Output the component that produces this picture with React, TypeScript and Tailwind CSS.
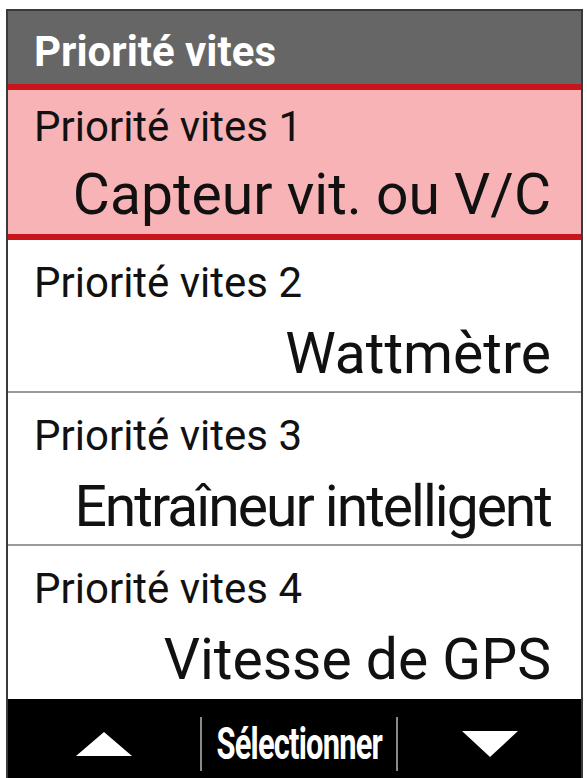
const rows = [
  { label: "Priorité vites 1", value: "Capteur vit. ou V/C", active: true, track: "" },
  { label: "Priorité vites 2", value: "Wattmètre", track: "" },
  { label: "Priorité vites 3", value: "Entraîneur intelligent", track: "tracking-[-2px]" },
  { label: "Priorité vites 4", value: "Vitesse de GPS", track: "" },
];

export default function App() {
  return (
    <div className="w-[587px] h-[778px] bg-white overflow-hidden font-['Roboto',sans-serif]">
      <div className="ml-[6px] mt-[9px] w-[577px] h-[780px] border-2 border-[#3a3a3a] flex flex-col">
        <div className="h-[73px] shrink-0 bg-[#666666] text-white font-bold text-[42px] leading-none pl-[26px] pt-[20px]">
          Priorité vites
        </div>
        {rows.map((r, i) => (
          <div
            key={r.label}
            className={
              r.active
                ? "h-[156px] shrink-0 bg-[#f8b3b6] border-y-[6px] border-[#c8141a] pt-[16px]"
                : i === rows.length - 1
                  ? "h-[153px] shrink-0 bg-white pt-[22px]"
                  : "h-[153px] shrink-0 bg-white border-b-2 border-[#9a9a9a] pt-[22px]"
            }
          >
            <div className="pl-[26px] text-[42px] leading-none text-[#111]">{r.label}</div>
            <div
              className={`pr-[30px] text-right text-[57px] leading-none text-[#111] ${
                r.active ? "mt-[18px]" : "mt-[21px]"
              } ${r.track}`}
            >
              {r.value}
            </div>
          </div>
        ))}
        <div className="flex-1 bg-black flex items-center pt-[2px]">
          <div className="w-[192px] flex justify-center">
            <svg width="56" height="24" viewBox="0 0 56 24">
              <polygon points="28,0 56,24 0,24" fill="white" />
            </svg>
          </div>
          <div className="w-[2px] h-[54px] bg-[#8a8a8a]" />
          <div className="w-[194px] flex justify-center">
            <span className="text-white font-bold text-[44px] leading-none inline-block scale-x-[0.7] tracking-tight">
              Sélectionner
            </span>
          </div>
          <div className="w-[2px] h-[54px] bg-[#8a8a8a]" />
          <div className="flex-1 flex justify-center">
            <svg width="56" height="26" viewBox="0 0 56 26">
              <polygon points="0,0 56,0 28,26" fill="white" />
            </svg>
          </div>
        </div>
      </div>
    </div>
  );
}
